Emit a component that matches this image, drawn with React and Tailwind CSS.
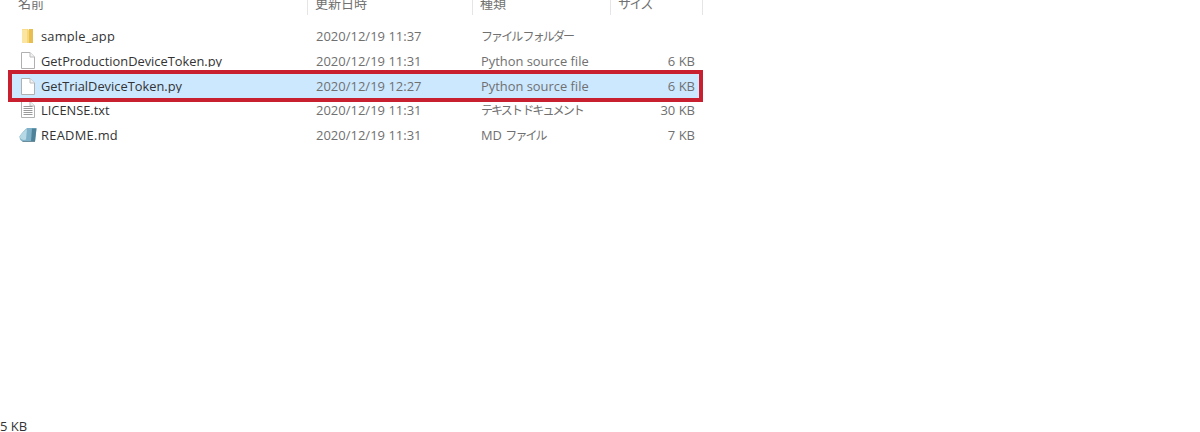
function FileIcon({ lines }) {
  return (
    <svg width="14" height="17" viewBox="0 0 14 17" className="shrink-0">
      <path d="M0.5 0.5H9L13.5 5V16.5H0.5Z" fill="#ffffff" stroke="#b0b0b0" strokeWidth="1" />
      <path d="M9 0.5V5H13.5" fill="#f2f2f2" stroke="#bcbcbc" strokeWidth="1" />
      {lines && (
        <path d="M2.5 5.5H11.5M2.5 7.5H11.5M2.5 9.5H11.5M2.5 11.5H11.5M2.5 13.5H11.5" stroke="#9a9a9a" strokeWidth="1" />
      )}
    </svg>
  );
}

function FolderIcon() {
  return (
    <svg width="14" height="16" viewBox="0 0 14 16" className="shrink-0">
      <path d="M1 1H7L8 2.5H12V15H1Z" fill="#f6d877" />
      <path d="M8 1H12V15H8Z" fill="#e8bd52" />
      <path d="M1 1.5H6V15H1Z" fill="#fbe5a2" />
    </svg>
  );
}

function MdIcon() {
  return (
    <svg width="18" height="16" viewBox="0 0 18 16" className="shrink-0">
      <path d="M0.5 9.5C2.5 6 5.5 3 8 1H17.5L16 14.5H3.5C1.5 14 0.5 12 0.5 9.5Z" fill="#7fb2c9" />
      <path d="M0.5 10C2.5 6.5 5.5 3.5 8 2L7 12.5C4.5 13.5 2 12.5 0.5 10Z" fill="#b7d9e6" />
      <path d="M13 1.5H17.5L16 14.5H12Z" fill="#4d8298" />
      <path d="M3.5 14.5H16" stroke="#6b8d9c" strokeWidth="1" />
    </svg>
  );
}

function Kana({ children }) {
  return <span className="text-[12px] tracking-[-1.9px]">{children}</span>;
}

const rows = [
  { icon: <FolderIcon />, name: "sample_app", track: "tracking-[0.2px]", date: "2020/12/19 11:37", type: <Kana>ファイル フォルダー</Kana>, size: "" },
  { icon: <FileIcon />, name: "GetProductionDeviceToken.py", track: "", date: "2020/12/19 11:31", type: "Python source file", size: "6 KB" },
  { icon: <FileIcon />, name: "GetTrialDeviceToken.py", track: "", date: "2020/12/19 12:27", type: "Python source file", size: "6 KB", selected: true },
  { icon: <FileIcon lines />, name: "LICENSE.txt", track: "", date: "2020/12/19 11:31", type: <Kana>テキスト ドキュメント</Kana>, size: "30 KB" },
  { icon: <MdIcon />, name: "README.md", track: "tracking-[0.3px]", date: "2020/12/19 11:31", type: <span>MD <Kana>ファイル</Kana></span>, size: "7 KB" },
];

function Row({ r }) {
  return (
    <div
      className={
        r.selected
          ? "relative z-10 -mt-[3px] -mb-[4.8px] ml-[8px] w-[695px] h-[32.5px] border-[4px] border-[#c8202f] bg-[#cce8ff] flex items-center"
          : "ml-[8px] w-[695px] h-[24.7px] border-x-[4px] border-transparent flex items-center"
      }
    >
      <div className="w-[29px] pl-[2px] flex justify-center items-center shrink-0">{r.icon}</div>
      <div className={"w-[275px] shrink-0 pt-[1px] text-[12.85px] text-[#333333] truncate " + r.track}>{r.name}</div>
      <div className="w-[165px] shrink-0 pt-[1px] text-[13px] text-[#707070]">{r.date}</div>
      <div className="w-[150px] shrink-0 pt-[1px] text-[12.9px] text-[#707070] whitespace-nowrap">{r.type}</div>
      <div className="w-[64px] shrink-0 pt-[1px] text-[13px] text-right text-[#707070]">{r.size}</div>
    </div>
  );
}

function Head({ w, children }) {
  return <div className={w + " pl-[7px] -mt-[3px] border-r border-[#e5e5e5] whitespace-nowrap"}>{children}</div>;
}

export default function App() {
  return (
    <div className="w-[1200px] h-[432px] bg-white overflow-hidden flex flex-col justify-between text-[13px] leading-none font-['Open_Sans','Noto_Sans_CJK_JP',sans-serif]">
      <div>
        <div className="flex h-[15px] overflow-hidden text-[#707070] w-[704px]">
          <div className="w-[308px] pl-[18px] -mt-[3px] border-r border-[#e5e5e5]">名前</div>
          <Head w="w-[165px]">更新日時</Head>
          <Head w="w-[138px]">種類</Head>
          <Head w="w-[92px]"><span className="tracking-[-1.5px]">サイズ</span></Head>
        </div>
        <div className="pt-[8.5px]">
          {rows.map((r) => (
            <Row key={r.name} r={r} />
          ))}
        </div>
      </div>
      <div className="h-[12px] text-[#333333]">5 KB</div>
    </div>
  );
}
